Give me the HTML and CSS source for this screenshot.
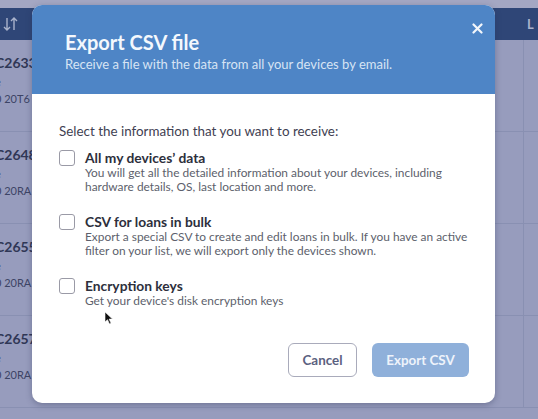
FILE: index.html
```html
<!DOCTYPE html>
<html>
<head>
<meta charset="utf-8">
<link rel="stylesheet" href="styles.css">
</head>
<body>
<div class="page">
  <div class="topstrip"></div>
  <div class="thead">
    <div class="th-sort">
      <svg width="18" height="16" viewBox="0 0 18 16"><path d="M5 2v12M2 11l3 3 3-3M12 14V2M9 5l3-3 3 3" fill="none" stroke="#aab3cc" stroke-width="1.4"/></svg>
    </div>
    <div class="th-spacer"></div>
    <div class="th-last">L</div>
  </div>
  <div class="row">
    <div class="cell-id"><b>C2633</b><span>e</span><span>0 20T6</span></div>
    <div class="cell-fill"></div><div class="cell-last"></div>
  </div>
  <div class="row">
    <div class="cell-id"><b>C2648</b><span>e</span><span>0 20RA</span></div>
    <div class="cell-fill"></div><div class="cell-last"></div>
  </div>
  <div class="row">
    <div class="cell-id"><b>C2655</b><span>e</span><span>0 20RA</span></div>
    <div class="cell-fill"></div><div class="cell-last"></div>
  </div>
  <div class="row">
    <div class="cell-id"><b>C2657</b><span>e</span><span>0 20RA</span></div>
    <div class="cell-fill"></div><div class="cell-last"></div>
  </div>
</div>

<div class="modal">
  <div class="modal-head">
    <h1 class="title">Export CSV file</h1>
    <p class="subtitle">Receive a file with the data from all your devices by email.</p>
    <svg class="close" width="11" height="11" viewBox="0 0 11 11"><path d="M1.5 1.5l8 8M9.5 1.5l-8 8" stroke="#f3f6fb" stroke-width="2.2" stroke-linecap="round"/></svg>
  </div>
  <div class="modal-body">
    <p class="lead">Select the information that you want to receive:</p>
    <div class="opt">
      <span class="box"></span>
      <div class="opt-text">
        <div class="opt-title">All my devices’ data</div>
        <div class="opt-desc">You will get all the detailed information about your devices, including hardware details, OS, last location and more.</div>
      </div>
    </div>
    <div class="opt">
      <span class="box"></span>
      <div class="opt-text">
        <div class="opt-title">CSV for loans in bulk</div>
        <div class="opt-desc">Export a special CSV to create and edit loans in bulk. If you have an active filter on your list, we will export only the devices shown.</div>
      </div>
    </div>
    <div class="opt">
      <span class="box"></span>
      <div class="opt-text">
        <div class="opt-title">Encryption keys</div>
        <div class="opt-desc">Get your device's disk encryption keys</div>
      </div>
    </div>
    <div class="actions">
      <button class="btn btn-cancel">Cancel</button>
      <button class="btn btn-primary">Export CSV</button>
    </div>
  </div>
</div>

<svg class="cursor" width="10" height="14" viewBox="0 0 10 14"><path d="M1 1v10l2.5-2.3 2 4.3 1.6-.7-2-4.2H8.5z" fill="#111" stroke="#fff" stroke-width=".6"/></svg>
</body>
</html>
```
FILE: styles.css
```css
* { box-sizing: border-box; }
html, body { margin: 0; padding: 0; }
body {
  width: 538px;
  height: 419px;
  overflow: hidden;
  background: #979cbd;
  font-family: Lato, "Noto Sans", sans-serif;
  position: relative;
}
.page { display: flex; flex-direction: column; }
.topstrip { height: 8px; background: #a4a7c3; }
.thead {
  height: 32px;
  background: #2f4677;
  display: flex;
  align-items: center;
}
.th-sort { width: 30px; padding-left: 2px; display: flex; align-items: center; }
.th-spacer { flex: 1; }
.th-last {
  width: 15px;
  color: #a9b1cb;
  font-size: 13px;
  font-weight: 700;
  border-left: 1px solid #2f4677;
  padding-left: 3px;
}
.row {
  height: 92px;
  border-bottom: 1px solid #8990b2;
  display: flex;
}
.cell-id {
  width: 40px;
  display: flex;
  flex-direction: column;
  padding-top: 13px;
  margin-left: -5px;
  color: #3d4466;
  font-size: 11px;
  line-height: 17px;
}
.cell-id b { font-size: 14px; color: #303756; line-height: 20px; }
.cell-fill { flex: 1; }
.cell-last { width: 15px; border-left: 1px solid #8990b2; }

.modal {
  position: absolute;
  left: 32px;
  top: 5px;
  width: 463px;
  height: 398px;
  background: #fff;
  border-radius: 10px;
  overflow: hidden;
  box-shadow: 0 2px 6px rgba(40, 45, 80, 0.35);
}
.modal-head {
  position: relative;
  height: 89px;
  background: #4e85c6;
  padding: 25px 33px 0;
}
.title {
  margin: 0;
  color: #f4f8fd;
  font-size: 20px;
  font-weight: 700;
  line-height: 24px;
}
.subtitle {
  margin: 2px 0 0;
  color: #d7e4f4;
  font-size: 13px;
  line-height: 16px;
}
.close {
  position: absolute;
  right: 12px;
  top: 18px;
}
.modal-body { padding: 29px 26px 0 27px; display: flex; flex-direction: column; }
.lead {
  margin: 0 0 11px;
  font-size: 13.4px;
  color: #3f4152;
  line-height: 16px;
}
.opt { display: flex; gap: 10px; margin-bottom: 20px; }
.box {
  flex: none;
  width: 16px;
  height: 16px;
  border: 1.5px solid #9a9aa6;
  border-radius: 3px;
  margin-top: 0;
}
.opt-title {
  font-size: 13.8px;
  font-weight: 700;
  color: #2d2f3c;
  line-height: 16px;
}
.opt-desc {
  font-size: 11.9px;
  color: #5d5f6c;
  line-height: 14px;
}
.actions {
  display: flex;
  justify-content: flex-end;
  gap: 15px;
  margin-top: 15px;
}
.btn {
  height: 34px;
  border-radius: 6px;
  font-family: Lato, "Noto Sans", sans-serif;
  font-size: 13.4px;
  font-weight: 700;
}
.btn-cancel {
  width: 69px;
  background: #fff;
  border: 1px solid #a9abbb;
  color: #5b6180;
}
.btn-primary {
  width: 97px;
  background: #8fb0da;
  border: none;
  color: #eef3fb;
}
.cursor { position: absolute; left: 104px; top: 311px; }
```
